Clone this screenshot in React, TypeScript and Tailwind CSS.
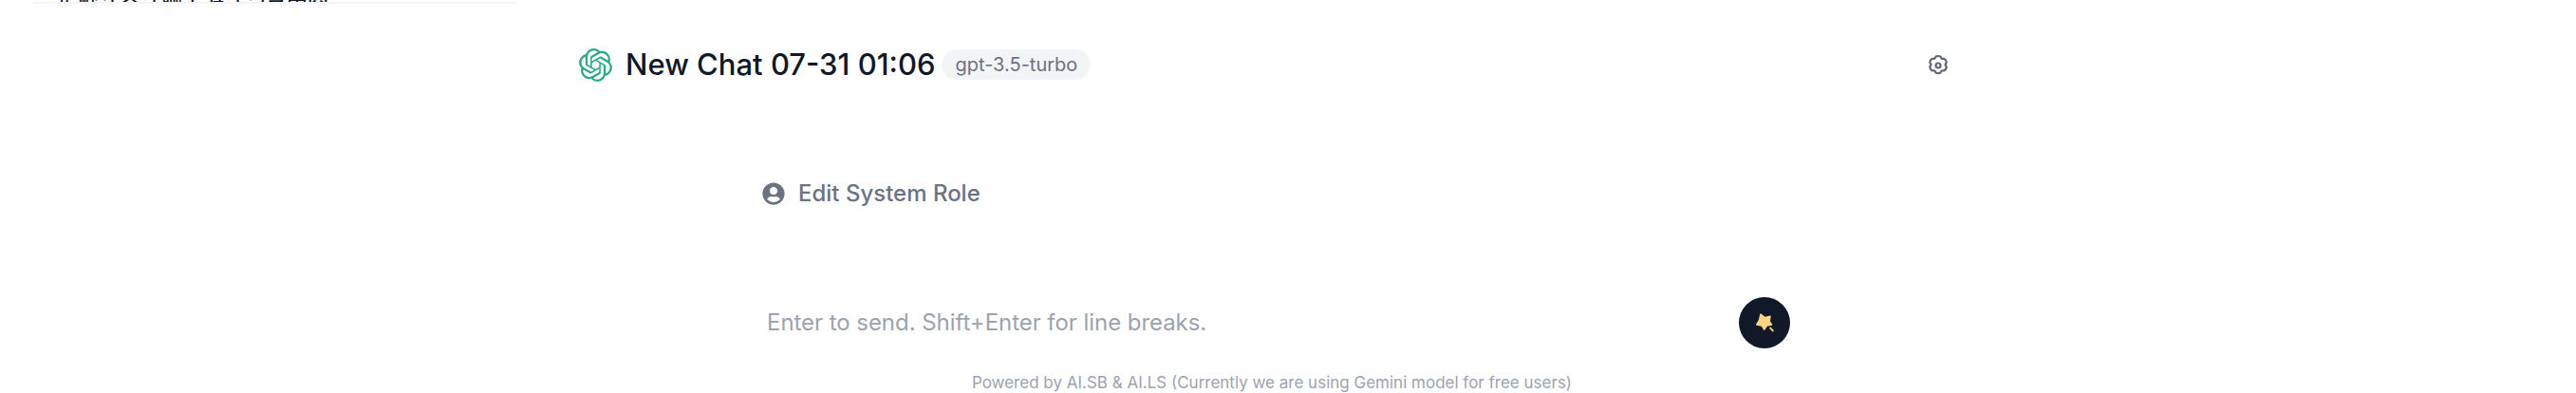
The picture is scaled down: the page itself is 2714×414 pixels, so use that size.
import { SiOpenai } from "react-icons/si";
import { FaUserCircle } from "react-icons/fa";

export default function App() {
  return (
    <div className="relative h-[414px] w-[2714px] overflow-hidden bg-white font-['Inter','Noto_Sans_CJK_SC',sans-serif]">
      <div className="ml-[35px] flex h-[2px] w-[510px] items-end overflow-hidden pl-[25px] text-[22px] font-medium leading-[28px] text-[#111827]">
        <span className="shrink-0 translate-y-[18px] whitespace-nowrap">
          <span className="mr-[8px]">#</span>默认会话聊天对话记录内容
        </span>
      </div>
      <div className="ml-[35px] h-[3px] w-[510px] bg-gradient-to-b from-[#f0f0f0] to-white" />
      <div className="ml-[610px] mt-[43px] flex w-[1444px] items-center">
        <SiOpenai className="h-[35px] w-[35px] text-[#2fa88a]" />
        <h1 className="ml-[14px] whitespace-nowrap text-[31px] font-medium leading-[40px] text-[#111827]">New Chat 07-31 01:06</h1>
        <span className="ml-[7px] rounded-full bg-[#f3f4f6] px-[14px] py-[2px] text-[20px] leading-[28px] text-[#6b7280]">gpt-3.5-turbo</span>
        <svg viewBox="0 0 24 24" fill="none" stroke="#5f6775" strokeWidth="2.200" strokeLinejoin="round" className="ml-auto mt-[2px] h-[24px] w-[24px]">
          <path d="M9.500 2.800c.6-1 4.400-1 5 0l.9 1.500c.2.300.5.500.9.500l1.800.1c1.200 0 3 3.200 2.500 4.200l-.9 1.500c-.2.300-.2.700 0 1l.9 1.500c.5 1-1.300 4.200-2.500 4.200l-1.800.1c-.4 0-.7.200-.9.500l-.9 1.500c-.6 1-4.400 1-5 0l-.9-1.500c-.2-.3-.5-.5-.9-.5l-1.800-.1c-1.200 0-3-3.200-2.500-4.200l.9-1.500c.2-.3.2-.7 0-1l-.9-1.500c-.5-1 1.300-4.200 2.500-4.200l1.800-.1c.4 0 .7-.2.900-.5z" />
          <circle cx="12" cy="12" r="2.500" />
        </svg>
      </div>
      <div className="ml-[803px] mt-[100px] flex items-center gap-[14px]">
        <FaUserCircle className="h-[24px] w-[24px] text-[#6b7280]" />
        <span className="whitespace-nowrap text-[24px] font-medium leading-[32px] text-[#6b7280]">Edit System Role</span>
      </div>
      <div className="ml-[808px] mt-[93px] flex w-[1078px] items-center justify-between">
        <span className="whitespace-nowrap text-[24px] leading-[54px] tracking-[-0.05px] text-[#9ca3af]">Enter to send. Shift+Enter for line breaks.</span>
        <button className="flex h-[54px] w-[54px] items-center justify-center rounded-full bg-[#111827]">
          <svg viewBox="0 0 30 30" className="h-[30px] w-[30px]">
            <path
              d="M11 6l4.500 3.500 5.500-1.200-.8 5.200 2.300 3.500-5 1-2.700 4.200-2.800-4.300-5.200-.9 2.700-4.500z"
              fill="#fcd380"
              stroke="#fcd380"
              strokeWidth="1.500"
              strokeLinejoin="round"
            />
            <path d="M20.500 20l4 4" stroke="#e8bd78" strokeWidth="2" fill="none" />
          </svg>
        </button>
      </div>
      <p className="mt-[23px] w-[2680px] text-center text-[17px] leading-[26px] text-[#9ca3af]">
        Powered by AI.SB &amp; AI.LS (Currently we are using Gemini model for free users)
      </p>
    </div>
  );
}
